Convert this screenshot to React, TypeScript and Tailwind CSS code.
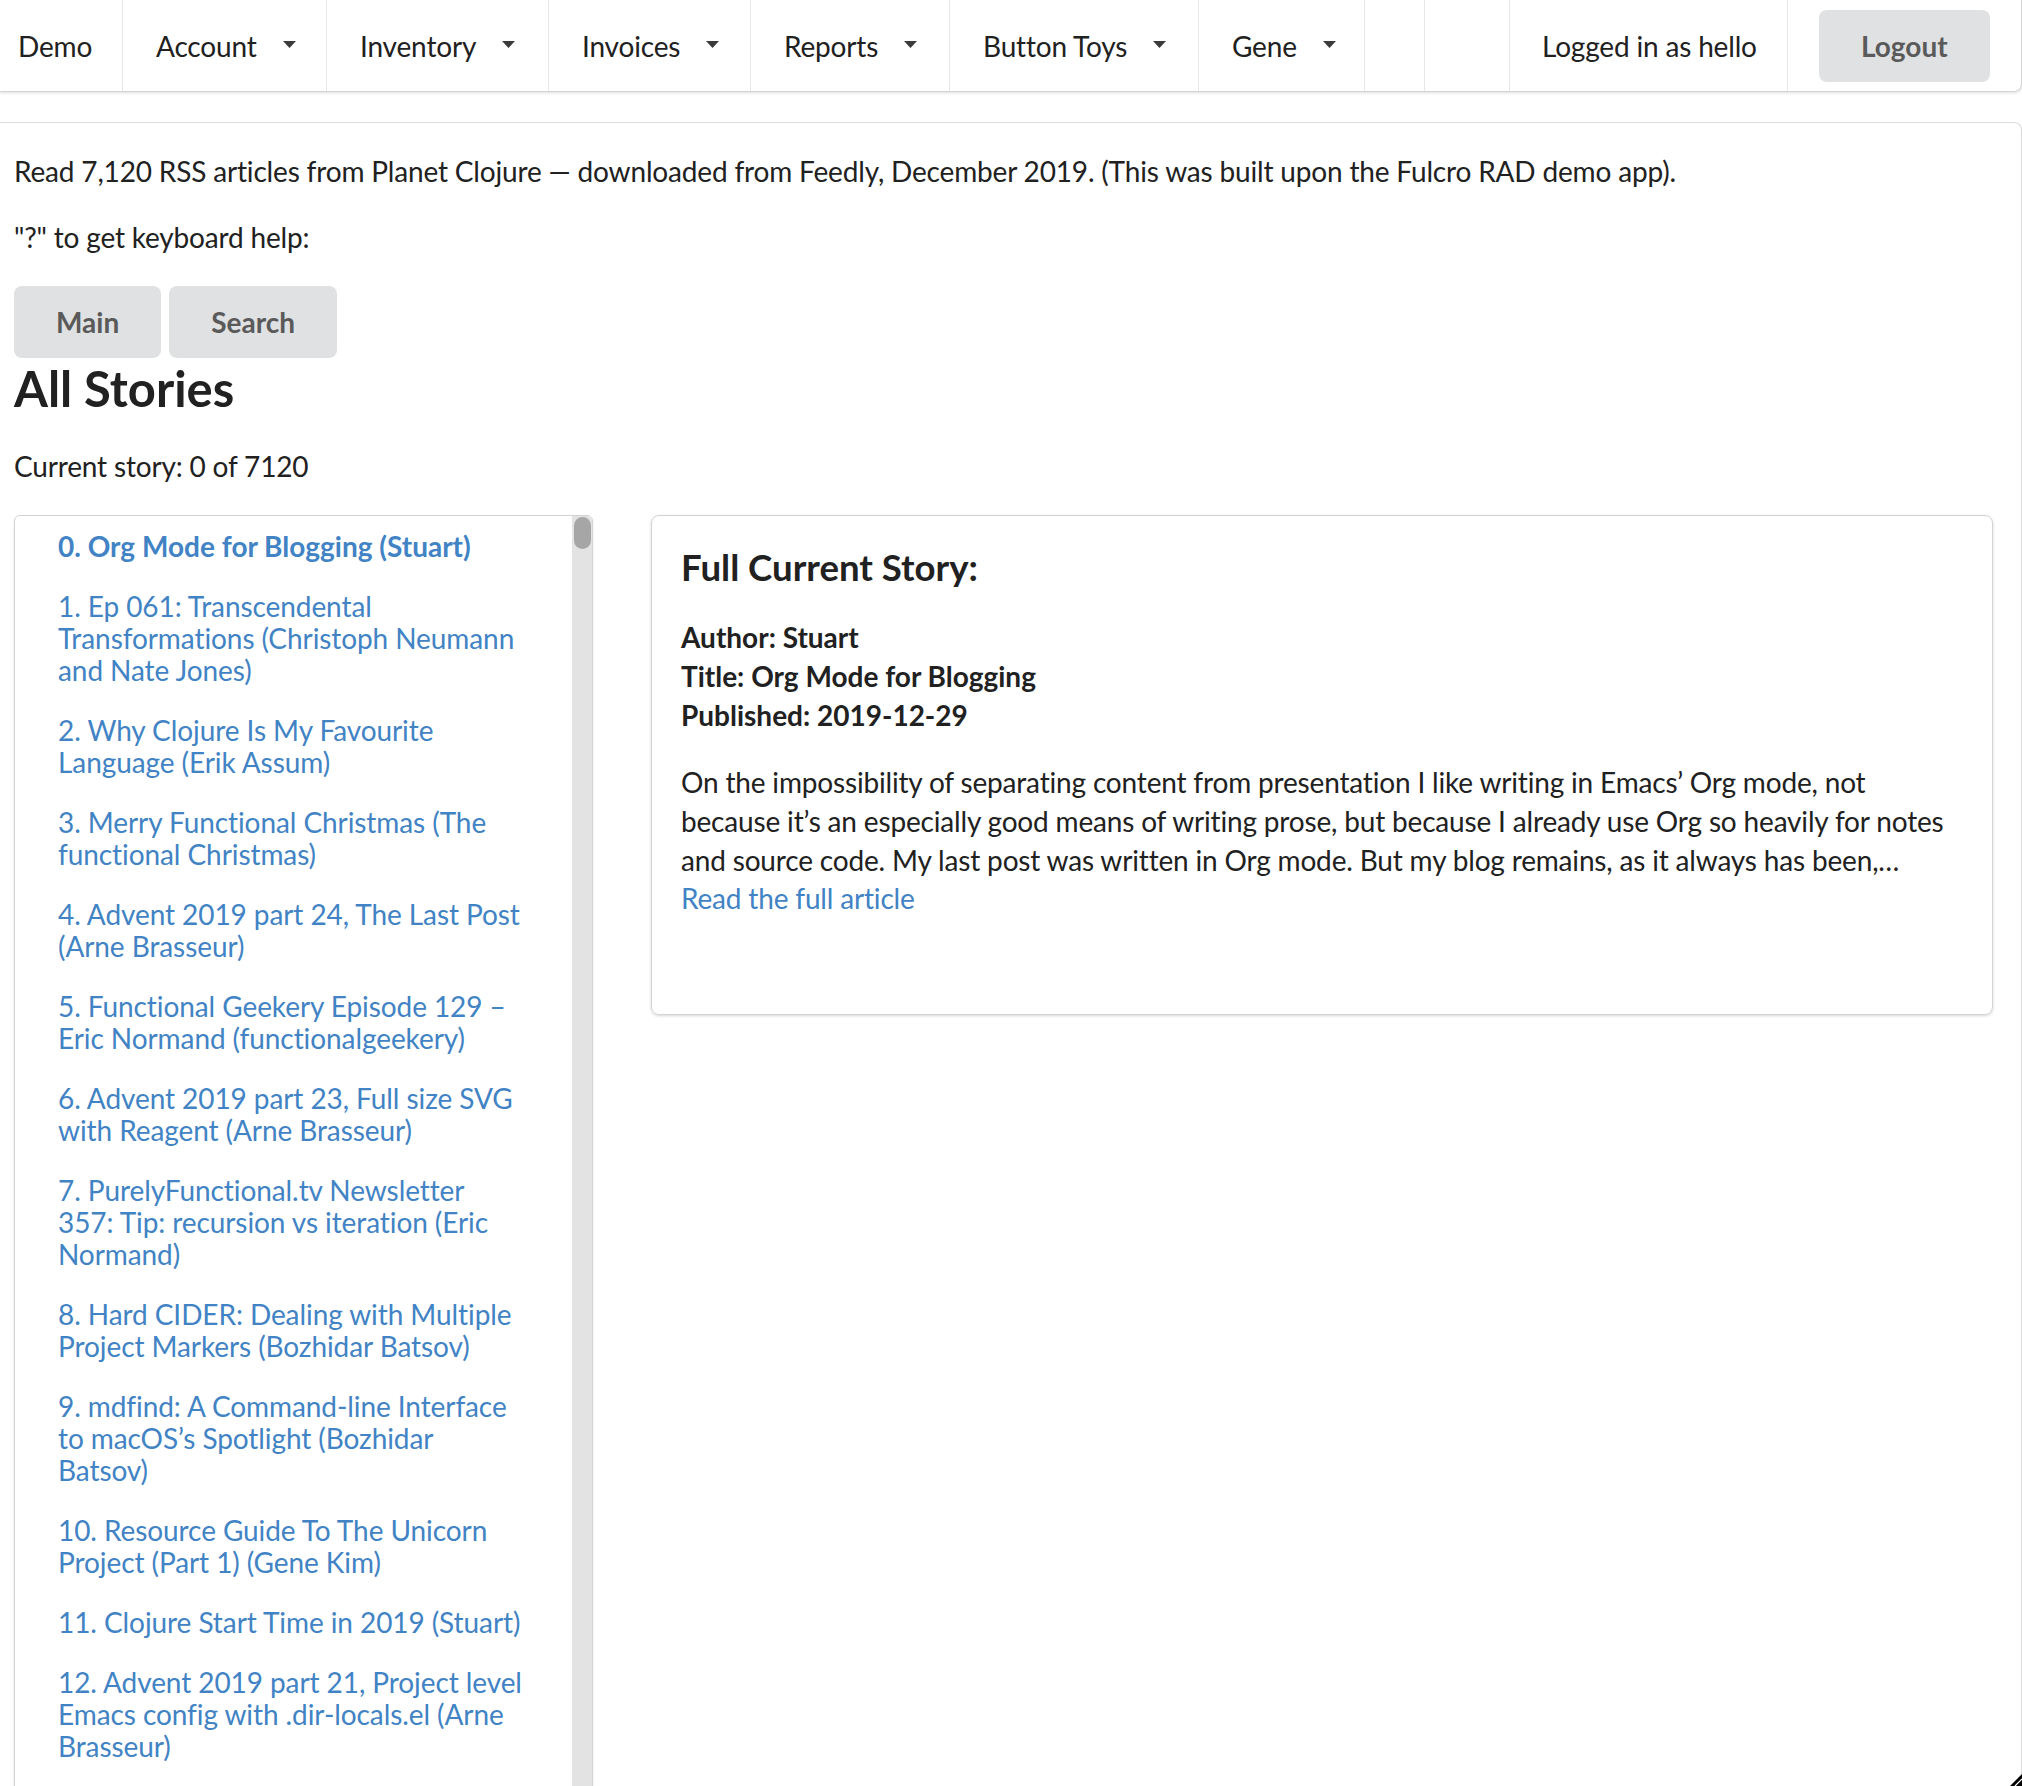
import React from "react";

const navItems: { label: string; w: string; pl?: string; caret?: boolean }[] = [
  { label: "Demo", w: "w-[123px]", pl: "pl-[18px]" },
  { label: "Account", w: "w-[204px]", caret: true },
  { label: "Inventory", w: "w-[222px]", caret: true },
  { label: "Invoices", w: "w-[202px]", caret: true },
  { label: "Reports", w: "w-[199px]", caret: true },
  { label: "Button Toys", w: "w-[249px]", caret: true },
  { label: "Gene", w: "w-[166px]", caret: true },
  { label: "", w: "w-[60px]" },
  { label: "", w: "w-[85px]" },
  { label: "Logged in as hello", w: "w-[278px]", pl: "pl-[32px]" },
];

const stories = [
  "0. Org Mode for Blogging (Stuart)",
  "1. Ep 061: Transcendental Transformations (Christoph Neumann and Nate Jones)",
  "2. Why Clojure Is My Favourite Language (Erik Assum)",
  "3. Merry Functional Christmas (The functional Christmas)",
  "4. Advent 2019 part 24, The Last Post (Arne Brasseur)",
  "5. Functional Geekery Episode 129 \u2013 Eric Normand (functionalgeekery)",
  "6. Advent 2019 part 23, Full size SVG with Reagent (Arne Brasseur)",
  "7. PurelyFunctional.tv Newsletter 357: Tip: recursion vs iteration (Eric Normand)",
  "8. Hard CIDER: Dealing with Multiple Project Markers (Bozhidar Batsov)",
  "9. mdfind: A Command-line Interface to macOS\u2019s Spotlight (Bozhidar Batsov)",
  "10. Resource Guide To The Unicorn Project (Part 1) (Gene Kim)",
  "11. Clojure Start Time in 2019 (Stuart)",
  "12. Advent 2019 part 21, Project level Emacs config with .dir-locals.el (Arne Brasseur)",
];

function Caret() {
  return (
    <svg width="13" height="7" viewBox="0 0 13 7" className="ml-[26px] mb-[3px] shrink-0">
      <path d="M0 0H13L6.5 7Z" fill="#3b3b3b" />
    </svg>
  );
}

export default function App() {
  return (
    <div className="relative h-[1786px] overflow-hidden bg-white font-[Lato,sans-serif] text-[28px] tracking-[-0.17px] text-[#212121]">
      {/* Top menu */}
      <div className="flex h-[92px] border-b border-r border-[#d4d4d5] rounded-br-[8px] shadow-[0_1px_3px_0_rgba(34,36,38,0.15)]">
        {navItems.map((item, i) => (
          <div
            key={i}
            className={`flex shrink-0 items-center border-r border-[#e6e6e7] ${item.w} ${item.pl ?? "pl-[33px]"}`}
          >
            {item.label && <span className="whitespace-nowrap">{item.label}</span>}
            {item.caret && <Caret />}
          </div>
        ))}
        <div className="flex flex-1 items-center pl-[31px]">
          <button className="h-[72px] rounded-[8px] bg-[#e0e1e2] px-[42px] font-bold tracking-normal text-[#5a5a5a]">
            Logout
          </button>
        </div>
      </div>

      {/* Main segment */}
      <div className="mt-[30px] h-[2000px] rounded-tr-[8px] border-t border-r border-[#dcdcdd] pl-[14px] pt-[29px]">
        <p className="mb-[27px] leading-[38.7px]">
          Read 7,120 RSS articles from Planet Clojure — downloaded from Feedly, December 2019. (This was built upon the Fulcro RAD demo app).
        </p>
        <p className="mb-[30px] leading-[38.7px]">"?" to get keyboard help:</p>

        <div className="flex gap-[8px]">
          <button className="h-[72px] rounded-[8px] bg-[#e0e1e2] px-[42px] font-bold tracking-normal text-[#5a5a5a]">Main</button>
          <button className="h-[72px] rounded-[8px] bg-[#e0e1e2] px-[42px] font-bold tracking-normal text-[#5a5a5a]">Search</button>
        </div>

        <h2 className="text-[48.9px] font-bold leading-[61.7px] tracking-normal">All Stories</h2>
        <p className="mt-[27px] leading-[38.7px]">Current story: 0 of 7120</p>

        <div className="mt-[29px] flex items-start gap-[58px]">
          {/* Story list */}
          <div className="flex h-[1300px] w-[579px] shrink-0 overflow-hidden rounded-[6px] border border-[#d4d4d5] shadow-[0_1px_2px_0_rgba(34,36,38,0.15)]">
            <div className="flex w-[509px] flex-col gap-[28px] pl-[43px] pt-[14px] tracking-[-0.08px]">
              {stories.map((s, i) => (
                <div key={i} className={`leading-[32px] text-[#4183c4] ${i === 0 ? "font-bold tracking-normal" : ""}`}>
                  {s}
                </div>
              ))}
            </div>
            <div className="ml-auto flex w-[20px] justify-center bg-[#e3e3e3]">
              <div className="mt-[1px] h-[32px] w-[17px] rounded-full bg-[#a6a6a6]" />
            </div>
          </div>

          {/* Full story card */}
          <div className="h-[500px] w-[1342px] shrink-0 rounded-[8px] border border-[#d4d4d5] px-[29px] pt-[28px] shadow-[0_1px_3px_0_rgba(34,36,38,0.18)]">
            <h3 className="mb-[28px] text-[36.6px] font-bold leading-[46.3px] tracking-normal">Full Current Story:</h3>
            <div className="font-bold leading-[38.7px] tracking-normal">
              <div>Author: Stuart</div>
              <div>Title: Org Mode for Blogging</div>
              <div>Published: 2019-12-29</div>
            </div>
            <div className="mt-[29px] leading-[38.7px]">
              <p>
                On the impossibility of separating content from presentation I like writing in Emacs’ Org mode, not because it’s an especially good means of writing prose, but because I already use Org so heavily for notes and source code. My last post was written in Org mode. But my blog remains, as it always has been,…
              </p>
              <a className="block text-[#4183c4]">Read the full article</a>
            </div>
          </div>
        </div>
      </div>

      {/* corner grip */}
      <svg width="12" height="12" viewBox="0 0 12 12" className="absolute bottom-0 right-0">
        <path d="M12 0V12H0Z" fill="#000" />
        <path d="M12 5L5 12" stroke="#fff" strokeWidth="1.2" />
      </svg>
    </div>
  );
}
